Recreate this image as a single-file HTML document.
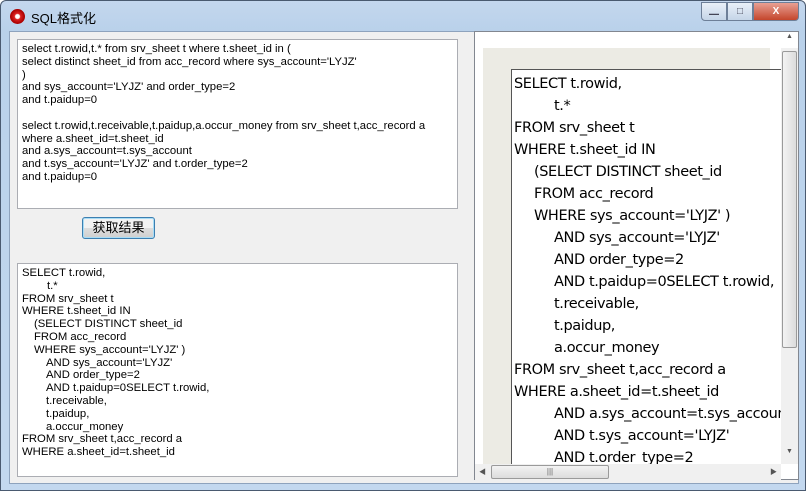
<!DOCTYPE html>
<html><head><meta charset="utf-8"><style>
*{margin:0;padding:0;box-sizing:border-box}
body{width:806px;height:491px;overflow:hidden;background:#fff;font-family:"Liberation Sans","Noto Sans CJK SC",sans-serif}
.win{position:absolute;left:0;top:0;width:806px;height:491px;background:linear-gradient(#c4d7ee,#b9d1ea 30px,#c3d8ef);border:1px solid #4a5a70;border-radius:6px 6px 0 0}
.title{position:absolute;left:30px;top:7px;font-size:13px;color:#000}
.icon{position:absolute;left:9px;top:8px;width:15px;height:15px;border-radius:50%;background:radial-gradient(circle at 50% 50%,#fff 0 2px,#d22 3px,#a00 7px)}
.btns{position:absolute;left:700px;top:1px;height:19px;display:flex}
.b{height:19px;border:1px solid #6d7f98;background:linear-gradient(#e9f0f8,#c5d5e8);color:#445;font-size:10px;text-align:center;line-height:17px}
.client{position:absolute;left:8px;top:30px;width:790px;height:453px;background:#f0f0f0;border:1px solid #8ea3bd}
.ta{position:absolute;background:#fff;border:1px solid #abadb3;font-size:11.3px;line-height:12.8px;white-space:pre;color:#000;padding:3px 4px;overflow:hidden}
.ta div,.page div{white-space:pre;height:auto}
.btn{position:absolute;left:81px;top:216px;width:73px;height:22px;border:1px solid #3c7fb1;border-radius:3px;background:linear-gradient(#f2f2f2 50%,#dedede 50%,#cfcfcf);box-shadow:inset 0 0 0 1px #a8dcf5;font-size:13px;text-align:center;line-height:20px}
.rp{position:absolute;left:473px;top:30px;width:325px;height:449px;background:#fff;border:1px solid #828790}
.beige{position:absolute;left:482px;top:47px;width:287px;height:417px;background:#ecebe4}
.page{position:absolute;left:510px;top:68px;width:270px;height:396px;background:#fff;border:1px solid #555;border-right:none;border-bottom:none;line-height:22px;white-space:pre;padding:3px 0 0 2px;overflow:hidden;color:#000;font-family:"DejaVu Sans","Liberation Sans",sans-serif;letter-spacing:-0.4px;font-size:14.5px}
.vs{position:absolute;left:780px;top:47px;width:17px;height:416px;background:#f0f0f0}
.hs{position:absolute;left:474px;top:463px;width:306px;height:16px;background:#f0f0f0}
.thumb{position:absolute;background:linear-gradient(90deg,#f3f3f3,#e0e0e0);border:1px solid #9a9a9a;border-radius:2px}
.l1{padding-left:12px}.l2{padding-left:24px}.l2b{padding-left:25px}
.page .l1{padding-left:20px}.page .l2{padding-left:40px}
</style></head><body>
<div class="win">
<div class="icon"></div>
<div class="title">SQL格式化</div>
<div class="btns"><div class="b" style="width:26px;border-radius:0 0 0 4px">▁</div><div class="b" style="width:26px">□</div><div class="b" style="width:46px;background:linear-gradient(#e8a093,#c4462c);color:#fff;font-weight:bold;border-radius:0 0 4px 0">X</div></div>
<div class="client"></div>
<div class="ta" style="left:16px;top:38px;width:441px;height:170px">select t.rowid,t.* from srv_sheet t where t.sheet_id in (
select distinct sheet_id from acc_record where sys_account='LYJZ'
)
and sys_account='LYJZ' and order_type=2
and t.paidup=0

select t.rowid,t.receivable,t.paidup,a.occur_money from srv_sheet t,acc_record a
where a.sheet_id=t.sheet_id
and a.sys_account=t.sys_account
and t.sys_account='LYJZ' and t.order_type=2
and t.paidup=0</div>
<div class="btn">获取结果</div>
<div class="ta" style="left:16px;top:262px;width:441px;height:214px"><div>SELECT t.rowid,</div><div class="l2b">t.*</div><div>FROM srv_sheet t</div><div>WHERE t.sheet_id IN</div><div class="l1">(SELECT DISTINCT sheet_id</div><div class="l1">FROM acc_record</div><div class="l1">WHERE sys_account='LYJZ' )</div><div class="l2">AND sys_account='LYJZ'</div><div class="l2">AND order_type=2</div><div class="l2">AND t.paidup=0SELECT t.rowid,</div><div class="l2">t.receivable,</div><div class="l2">t.paidup,</div><div class="l2">a.occur_money</div><div>FROM srv_sheet t,acc_record a</div><div>WHERE a.sheet_id=t.sheet_id</div></div>
<div class="rp"></div>
<div class="beige"></div>
<div class="page"><div>SELECT t.rowid,</div><div class="l2">t.*</div><div>FROM srv_sheet t</div><div>WHERE t.sheet_id IN</div><div class="l1">(SELECT DISTINCT sheet_id</div><div class="l1">FROM acc_record</div><div class="l1">WHERE sys_account='LYJZ' )</div><div class="l2">AND sys_account='LYJZ'</div><div class="l2">AND order_type=2</div><div class="l2">AND t.paidup=0SELECT t.rowid,</div><div class="l2">t.receivable,</div><div class="l2">t.paidup,</div><div class="l2">a.occur_money</div><div>FROM srv_sheet t,acc_record a</div><div>WHERE a.sheet_id=t.sheet_id</div><div class="l2">AND a.sys_account=t.sys_account</div><div class="l2">AND t.sys_account='LYJZ'</div><div class="l2">AND t.order_type=2</div></div>
<div class="vs"><div style="position:absolute;top:-15px;left:5px;font-size:7px;color:#555">▲</div><div class="thumb" style="left:1px;top:3px;width:15px;height:297px;background:linear-gradient(90deg,#f3f3f3,#dcdcdc)"></div><div style="position:absolute;top:400px;left:5px;font-size:7px;color:#555">▼</div></div>
<div class="hs"><div style="position:absolute;left:4px;top:3px;font-size:7px;color:#555">◀</div><div class="thumb" style="left:16px;top:1px;width:118px;height:14px;background:linear-gradient(#f3f3f3,#dcdcdc);font-size:8px;text-align:center;line-height:12px;color:#666">|||</div><div style="position:absolute;left:295px;top:3px;font-size:7px;color:#555">▶</div></div>
</div>
</body></html>
